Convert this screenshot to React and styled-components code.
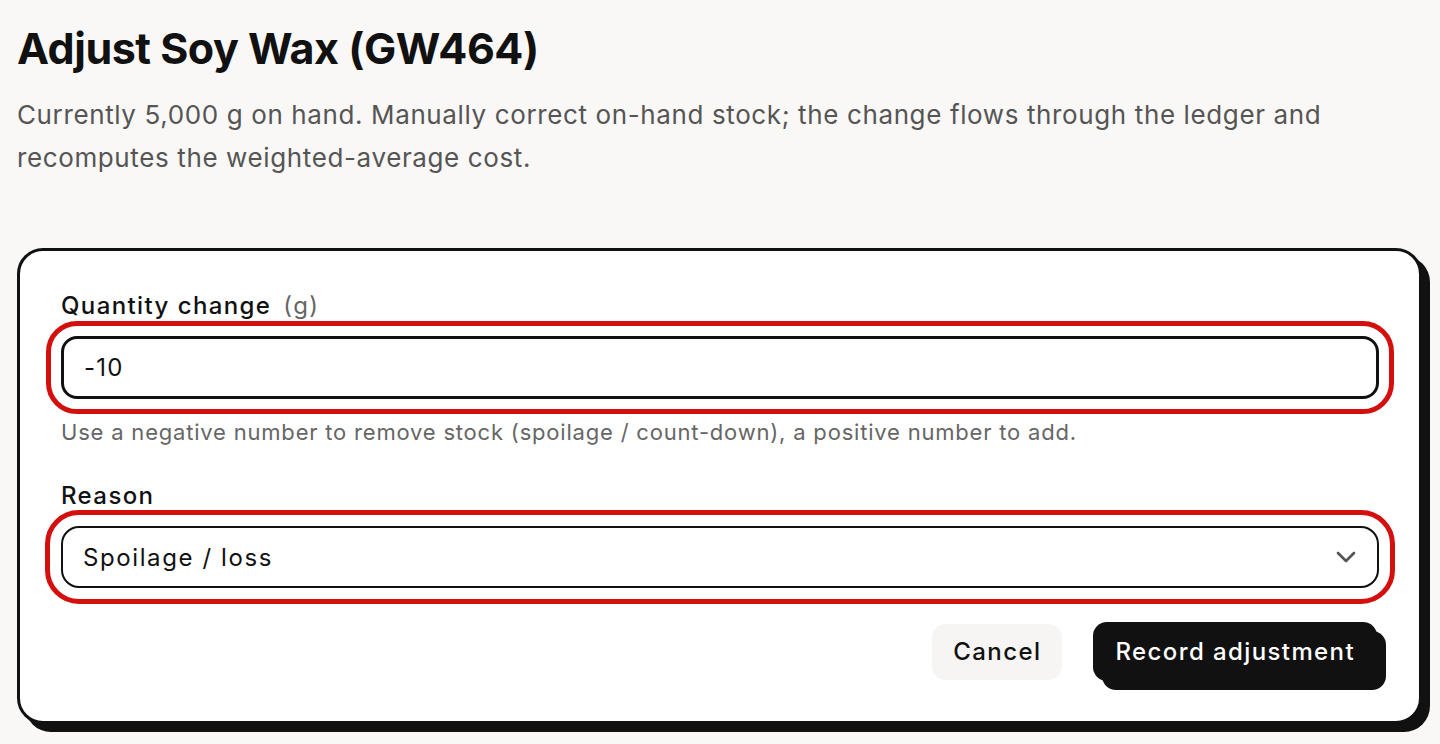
import React from "react";
import styled, { createGlobalStyle } from "styled-components";
import { ChevronDown } from "lucide-react";

const Global = createGlobalStyle`
  * { box-sizing: border-box; }
  html, body { margin: 0; padding: 0; background: #f9f8f6; }
  body { font-family: Inter, "Noto Sans", sans-serif; color: #111; }
`;

const Page = styled.main`
  display: flex;
  flex-direction: column;
  padding: 19px 18px 20px 17px;
  min-height: 744px;
`;

const Title = styled.h1`
  margin: 0;
  font-size: 43px;
  line-height: 58px;
  font-weight: 700;
  letter-spacing: -0.5px;
  color: #111;
`;

const Lead = styled.p`
  margin: 16px 0 0;
  font-size: 26px;
  line-height: 43px;
  color: #555;
  letter-spacing: 0.62px;
  max-width: 1330px;
`;

const Card = styled.section`
  margin-top: 69px;
  background: #fff;
  border: 3px solid #111;
  border-radius: 26px;
  box-shadow: 8px 8px 0 #111;
  padding: 40px 40px 40px 41px;
  display: flex;
  flex-direction: column;
`;

const Field = styled.div`
  display: flex;
  flex-direction: column;
  margin-top: ${(p) => p.$mt || 0}px;
`;

const Label = styled.label`
  font-size: 24px;
  line-height: 30px;
  font-weight: 500;
  letter-spacing: 1.4px;
  color: #111;
  margin-bottom: 15px;
`;

const Unit = styled.span`
  font-weight: 400;
  color: #666;
  margin-left: 12px;
`;

const Input = styled.input`
  width: 100%;
  height: 63px;
  border: 3px solid #111;
  border-radius: 16px;
  padding: 0 20px;
  font: inherit;
  font-size: 24px;
  letter-spacing: 1.2px;
  color: #111;
  background: #fff;
  outline: 5px solid #d4100f;
  outline-offset: 10px;
`;

const Hint = styled.p`
  margin: 19px 0 0;
  font-size: 22px;
  line-height: 28px;
  color: #666;
  letter-spacing: 0.8px;
`;

const SelectBox = styled.div`
  width: 100%;
  height: 62px;
  border: 2px solid #111;
  border-radius: 18px;
  padding: 0 15px 0 20px;
  display: flex;
  align-items: center;
  justify-content: space-between;
  font-size: 24px;
  color: #111;
  background: #fff;
  outline: 5px solid #d4100f;
  outline-offset: 11px;
  letter-spacing: 1.6px;
`;

const Chevron = styled(ChevronDown)`
  flex: none;
  color: #555;
`;

const Actions = styled.div`
  display: flex;
  justify-content: flex-end;
  align-items: center;
  gap: 31px;
  margin-top: 34px;
  padding-right: 2px;
`;

const Button = styled.button`
  font: inherit;
  font-size: 24px;
  font-weight: 500;
  letter-spacing: 1.4px;
  height: ${(p) => (p.$primary ? 59 : 56)}px;
  padding: 0 ${(p) => (p.$primary ? 22 : 21)}px;
  border-radius: 14px;
  border: none;
  background: ${(p) => (p.$primary ? "#111" : "#f7f5f3")};
  color: ${(p) => (p.$primary ? "#fff" : "#111")};
  box-shadow: ${(p) => (p.$primary ? "9px 9px 0 #111" : "none")};
  cursor: pointer;
`;

export default function App() {
  return (
    <>
      <Global />
      <Page>
        <Title>Adjust Soy Wax (GW464)</Title>
        <Lead>
          Currently 5,000 g on hand. Manually correct on-hand stock; the change
          flows through the ledger and recomputes the weighted-average cost.
        </Lead>
        <Card>
          <Field>
            <Label>
              Quantity change<Unit>(g)</Unit>
            </Label>
            <Input defaultValue="-10" />
            <Hint>
              Use a negative number to remove stock (spoilage / count-down), a
              positive number to add.
            </Hint>
          </Field>
          <Field $mt={35}>
            <Label>Reason</Label>
            <SelectBox>
              <span>Spoilage / loss</span>
              <Chevron size={32} strokeWidth={2} />
            </SelectBox>
          </Field>
          <Actions>
            <Button>Cancel</Button>
            <Button $primary>Record adjustment</Button>
          </Actions>
        </Card>
      </Page>
    </>
  );
}
